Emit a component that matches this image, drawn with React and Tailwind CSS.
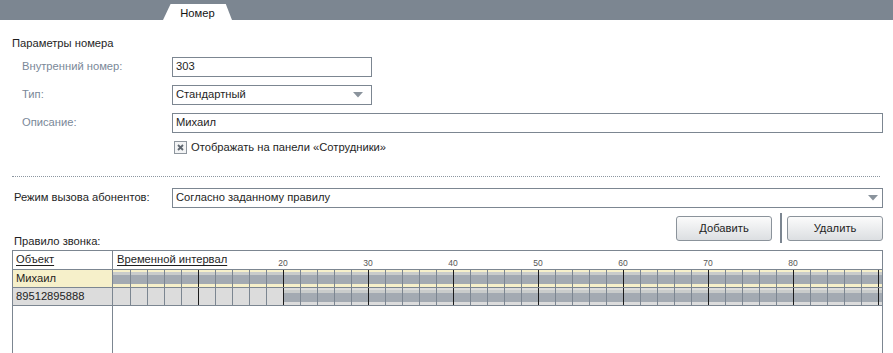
const cells = Array.from({ length: 46 }, (_, i) => i);
const ticks = [20, 30, 40, 50, 60, 70, 80];

function Arrow() {
  return (
    <svg width="10" height="6" viewBox="0 0 10 6" className="shrink-0">
      <polygon points="0,0 10,0 5,5.5" fill="#8a939c" />
    </svg>
  );
}

function Cell({ k, bar }) {
  const border =
    k === 0 ? "" : k % 5 === 0 ? "border-l border-[#1c1c1c]" : "border-l border-[#7c8691]";
  return (
    <div className={`w-[17px] shrink-0 h-full flex flex-col ${border}`}>
      {bar ? (
        <>
          <div className="h-[2px]" />
          <div className="h-[3px] bg-[#c9cccb]" />
          <div className="h-[9px] bg-[#a3aab2]" />
          <div className="h-[3px]" />
        </>
      ) : null}
    </div>
  );
}

export default function App() {
  return (
    <div className="w-[893px] h-[353px] overflow-hidden bg-white font-['Liberation_Sans',Arial,sans-serif] text-[11.2px] text-[#1e1e1e] leading-none flex flex-col">
      {/* top bar */}
      <div className="h-[20px] shrink-0 bg-[#7c8691] flex items-end pl-[163px]">
        <div className="h-[16px] w-[69px] bg-white [clip-path:polygon(11%_0,91%_0,100%_100%,0_100%)] flex items-center justify-center pt-[3px] text-[#141414]">
          Номер
        </div>
      </div>

      <div className="pl-[12px] pr-[10px] flex flex-col flex-1 min-h-0">
        <div className="mt-[15px] h-[16px] leading-[16px]">Параметры номера</div>

        <div className="mt-[6px] flex items-center h-[20px]">
          <div className="w-[160px] pl-[10px] text-[#7a8898]">Внутренний номер:</div>
          <div className="w-[200px] h-[20px] border border-[#7c8691] flex items-center px-[3px]">303</div>
        </div>
        <div className="mt-[8px] flex items-center h-[20px]">
          <div className="w-[160px] pl-[10px] text-[#7a8898]">Тип:</div>
          <div className="w-[200px] h-[20px] border border-[#7c8691] flex items-center justify-between pl-[3px] pr-[8px]">
            <span>Стандартный</span>
            <Arrow />
          </div>
        </div>
        <div className="mt-[8px] flex items-center h-[20px]">
          <div className="w-[160px] pl-[10px] text-[#7a8898]">Описание:</div>
          <div className="flex-1 h-[20px] border border-[#7c8691] flex items-center px-[3px]">Михаил</div>
        </div>
        <div className="mt-[8px] flex items-center h-[13px] pl-[162px]">
          <div className="w-[13px] h-[13px] border border-[#8e969e] bg-[#f3f4f5] flex items-center justify-center">
            <svg width="7" height="7" viewBox="0 0 7 7">
              <path d="M1 1 L6 6 M6 1 L1 6" stroke="#5f6770" strokeWidth="1.8" />
            </svg>
          </div>
          <span className="ml-[4px]">Отображать на панели «Сотрудники»</span>
        </div>

        <div className="mt-[22px] mr-[3px] border-t border-dotted border-[#8c96a0]" />

        <div className="mt-[11px] flex items-center h-[20px]">
          <div className="w-[160px] pl-[2px]">Режим вызова абонентов:</div>
          <div className="flex-1 h-[20px] border border-[#7c8691] flex items-center justify-between pl-[3px] pr-[4px]">
            <span>Согласно заданному правилу</span>
            <Arrow />
          </div>
        </div>

        <div className="mt-[5px] h-[37px] flex justify-between items-start">
          <div className="self-end mb-[3px] pl-[2px]">Правило звонка:</div>
          <div className="flex items-start">
            <button className="mt-[3px] w-[96px] h-[25px] rounded-[3px] border border-[#8b939b] bg-linear-to-b from-[#fbfbfb] to-[#dcdfe2] text-[11.2px] text-[#1e1e1e]">
              Добавить
            </button>
            <div className="ml-[8px] w-[2px] h-[30px] bg-[#7c8691]" />
            <button className="ml-[5px] mt-[3px] w-[96px] h-[25px] rounded-[3px] border border-[#8b939b] bg-linear-to-b from-[#fbfbfb] to-[#dcdfe2] text-[11.2px] text-[#1e1e1e]">
              Удалить
            </button>
          </div>
        </div>

        {/* grid */}
        <div className="w-[871px] flex-1 flex flex-col border-t border-l border-r border-[#7c8691]">
          {/* header */}
          <div className="h-[19px] flex border-b border-[#7c8691]">
            <div className="w-[100px] border-r border-[#7c8691] pl-[3px] flex items-center">
              <span className="underline underline-offset-2">Объект</span>
            </div>
            <div className="flex-1 relative pl-[4px] flex items-center">
              <span className="underline underline-offset-2">Временной интервал</span>
              {ticks.map((t, i) => (
                <span
                  key={t}
                  className="absolute top-[7px] w-[20px] -ml-[10px] text-center text-[8.5px] leading-[10px] text-[#555]"
                  style={{ left: 170 + 85 * i }}
                >
                  {t}
                </span>
              ))}
            </div>
          </div>
          {/* row 1 */}
          <div className="h-[18px] flex border-b border-[#7c8691] bg-[#f6f0ca]">
            <div className="w-[100px] border-r border-[#7c8691] pl-[3px] flex items-center">Михаил</div>
            <div className="flex-1 flex overflow-hidden">
              {cells.map((k) => (
                <Cell key={k} k={k} bar />
              ))}
            </div>
          </div>
          {/* row 2 */}
          <div className="h-[18px] flex border-b border-[#7c8691] bg-[#dcdcdc]">
            <div className="w-[100px] border-r border-[#7c8691] pl-[3px] flex items-center">89512895888</div>
            <div className="flex-1 flex overflow-hidden">
              {cells.map((k) => (
                <Cell key={k} k={k} bar={k >= 10} />
              ))}
            </div>
          </div>
          {/* empty */}
          <div className="flex-1 flex">
            <div className="w-[100px] border-r border-[#7c8691]" />
            <div className="flex-1" />
          </div>
        </div>
      </div>
    </div>
  );
}
